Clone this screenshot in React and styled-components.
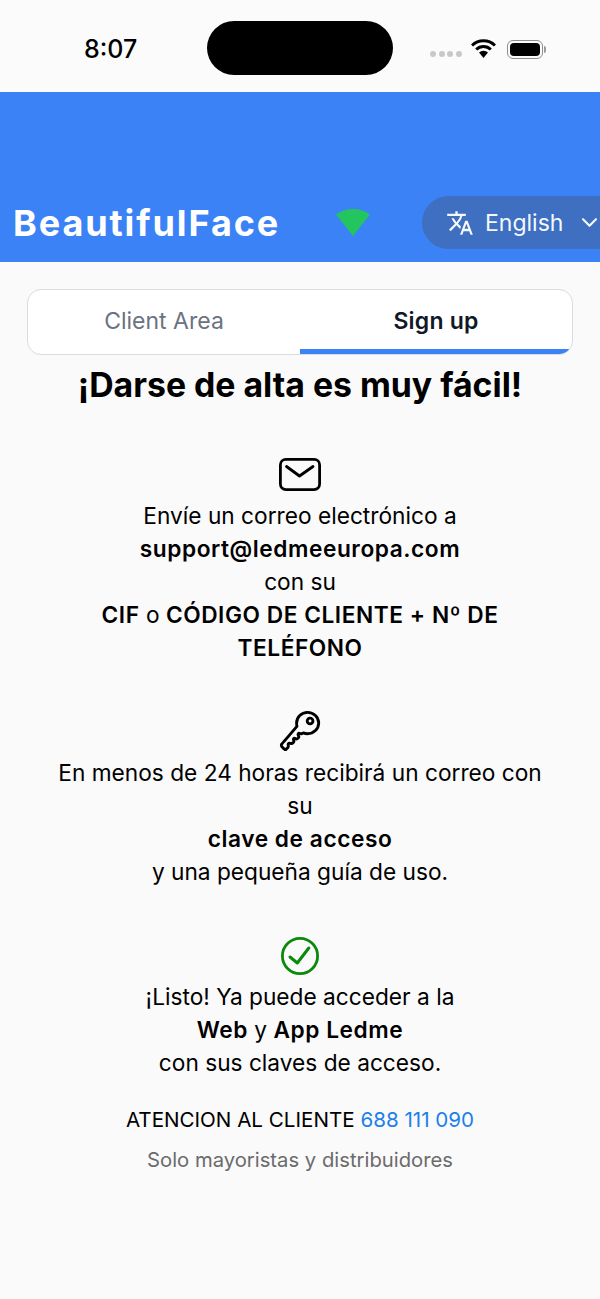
import React from "react";
import styled, { createGlobalStyle } from "styled-components";
import { MdTranslate } from "react-icons/md";
import { IoChevronDown, IoKeyOutline } from "react-icons/io5";

const Global = createGlobalStyle`
  html, body { margin: 0; padding: 0; background: #fafafa; }
  body { font-family: Inter, "Noto Sans", sans-serif; color: #000; }
  * { box-sizing: border-box; }
`;
const Page = styled.div`
  width: 600px;
  height: 1299px;
  overflow: hidden;
  background: #fafafa;
`;
const StatusBar = styled.div`
  height: 92px;
  display: grid;
  grid-template-columns: 207px 187px 1fr;
  padding-top: 21px;
  background: #fbfbfb;
`;
const Time = styled.div`
  font-size: 25px;
  font-weight: 500;
  line-height: 30px;
  padding: 13px 0 0 84px;
`;
const Island = styled.div`
  width: 186px;
  height: 54px;
  border-radius: 27px;
  background: #000;
`;
const StatusIcons = styled.div`
  display: flex;
  align-items: flex-start;
  padding: 18px 0 0 36px;
`;
const Dots = styled.div`
  display: flex;
  gap: 2.5px;
  margin-top: 12px;
`;
const Dot = styled.span`
  width: 6px;
  height: 6px;
  border-radius: 50%;
  background: #c8c8c8;
`;
const WifiIcon = styled.svg`
  width: 25px;
  height: 20px;
  margin: 0 11px 0 9px;
`;
const Battery = styled.div`
  width: 36px;
  height: 19px;
  padding: 2px;
  border: 1.5px solid #8e8e8e;
  border-radius: 6px;
  margin-top: 1px;
`;
const BatteryFill = styled.div`
  width: 100%;
  height: 100%;
  border-radius: 4px;
  background: #000;
`;
const BatteryCap = styled.div`
  width: 2px;
  height: 7px;
  margin: 7px 0 0 1px;
  border-radius: 0 2px 2px 0;
  background: #9a9a9a;
`;
const Header = styled.header`
  height: 170px;
  background: #3b82f6;
  display: flex;
  align-items: flex-end;
  padding: 0 0 13px 13px;
`;
const Brand = styled.div`
  width: 266px;
  color: #fff;
  font-size: 36px;
  font-weight: 700;
  letter-spacing: 1.9px;
  line-height: 36px;
  white-space: nowrap;
  margin-bottom: 8px;
`;
const Signal = styled.svg`
  width: 34px;
  height: 28px;
  margin: 0 52px 13px 57px;
`;
const LangPill = styled.div`
  flex: 1;
  height: 53px;
  margin-right: -10px;
  border-radius: 27px 0 0 27px;
  background: #3e6fc0;
  color: #f4f7fd;
  display: flex;
  align-items: center;
  padding-left: 24px;
  font-size: 23px;
  white-space: nowrap;
  overflow: hidden;
`;
const LangText = styled.span`
  margin: 0 15px 0 11px;
`;
const Tabs = styled.div`
  width: 546px;
  height: 66px;
  margin: 27px auto 0;
  display: flex;
  background: #fff;
  border: 1.5px solid #d9dbe0;
  border-radius: 14px;
  overflow: hidden;
`;
const Tab = styled.div`
  flex: 1;
  display: flex;
  align-items: center;
  justify-content: center;
  font-size: 23px;
  font-weight: ${p => (p.$active ? 600 : 400)};
  letter-spacing: ${p => (p.$active ? "0.2px" : "0")};
  color: ${p => (p.$active ? "#111827" : "#6b7280")};
  border-bottom: 5px solid ${p => (p.$active ? "#3b82f6" : "transparent")};
  padding-top: 3px;
`;
const Title = styled.h1`
  margin: 8px 0 0;
  text-align: center;
  font-size: 33.8px;
  line-height: 44px;
  font-weight: 700;
`;
const Step = styled.section`
  width: 500px;
  margin: ${p => p.$top}px auto 0;
  text-align: center;
  font-size: 22.7px;
  line-height: 33px;
`;
const IconWrap = styled.div`
  height: ${p => p.$h}px;
  font-size: ${p => p.$size}px;
  color: ${p => p.$color || "#000"};
  display: flex;
  justify-content: center;
  align-items: center;
`;
const Strong = styled.strong`
  font-weight: 600;
  letter-spacing: 0.55px;
`;
const Line = styled.div``;
const Contact = styled.div`
  margin-top: 25px;
  text-align: center;
  font-size: 20.6px;
  line-height: 32px;
`;
const Phone = styled.span`
  color: #1b80ea;
`;
const Note = styled.div`
  margin-top: 8px;
  text-align: center;
  font-size: 20.25px;
  line-height: 32px;
  color: #6b6b6b;
`;

const MailIcon = () => (
  <svg width="42" height="33" viewBox="0 0 42 33" fill="none" stroke="currentColor" strokeWidth="2.8" strokeLinecap="round" strokeLinejoin="round">
    <rect x="1.4" y="1.4" width="39.2" height="30.2" rx="5.5" />
    <path d="M7.5 8.5L20.5 18L34 8.5" />
  </svg>
);
const CheckIcon = () => (
  <svg width="40" height="40" viewBox="0 0 40 40" fill="none" stroke="currentColor" strokeLinecap="round" strokeLinejoin="round">
    <circle cx="20" cy="20" r="17.6" strokeWidth="2.8" />
    <path d="M10 21L17.3 27L28.8 12" strokeWidth="3" />
  </svg>
);

export default function App() {
  return (
    <Page>
      <Global />
      <StatusBar>
        <Time>8:07</Time>
        <Island />
        <StatusIcons>
          <Dots><Dot /><Dot /><Dot /><Dot /></Dots>
          <WifiIcon viewBox="0 0 25 20">
            <path d="M1 6.5a16.5 16.5 0 0 1 23 0" fill="none" stroke="#000" strokeWidth="3" />
            <path d="M5.2 10.5a10.5 10.5 0 0 1 14.6 0" fill="none" stroke="#000" strokeWidth="3" />
            <path d="M8 13.5a6.5 6.5 0 0 1 9 0L12.5 19z" fill="#000" />
          </WifiIcon>
          <Battery><BatteryFill /></Battery>
          <BatteryCap />
        </StatusIcons>
      </StatusBar>
      <Header>
        <Brand>BeautifulFace</Brand>
        <Signal viewBox="0 0 34 28">
          <path d="M0 6.5C9 -1 25 -1 34 6.5L17 28z" fill="#22c55e" />
        </Signal>
        <LangPill>
          <MdTranslate size={28} />
          <LangText>English</LangText>
          <IoChevronDown size={23} />
        </LangPill>
      </Header>
      <Tabs>
        <Tab>Client Area</Tab>
        <Tab $active>Sign up</Tab>
      </Tabs>
      <Title>¡Darse de alta es muy fácil!</Title>
      <Step $top={42}>
        <IconWrap $h={50}><MailIcon /></IconWrap>
        <Line>Envíe un correo electrónico a</Line>
        <Line><Strong>support@ledmeeuropa.com</Strong></Line>
        <Line>con su</Line>
        <Line><Strong>CIF</Strong> o <Strong>CÓDIGO DE CLIENTE + Nº DE TELÉFONO</Strong></Line>
      </Step>
      <Step $top={42}>
        <IconWrap $h={50} $size={46}><IoKeyOutline /></IconWrap>
        <Line>En menos de 24 horas recibirá un correo con su</Line>
        <Line><Strong>clave de acceso</Strong></Line>
        <Line>y una pequeña guía de uso.</Line>
      </Step>
      <Step $top={43}>
        <IconWrap $h={49} $color="#0a8a0a"><CheckIcon /></IconWrap>
        <Line>¡Listo! Ya puede acceder a la</Line>
        <Line><Strong>Web</Strong> y <Strong>App Ledme</Strong></Line>
        <Line>con sus claves de acceso.</Line>
      </Step>
      <Contact>ATENCION AL CLIENTE <Phone>688 111 090</Phone></Contact>
      <Note>Solo mayoristas y distribuidores</Note>
    </Page>
  );
}
